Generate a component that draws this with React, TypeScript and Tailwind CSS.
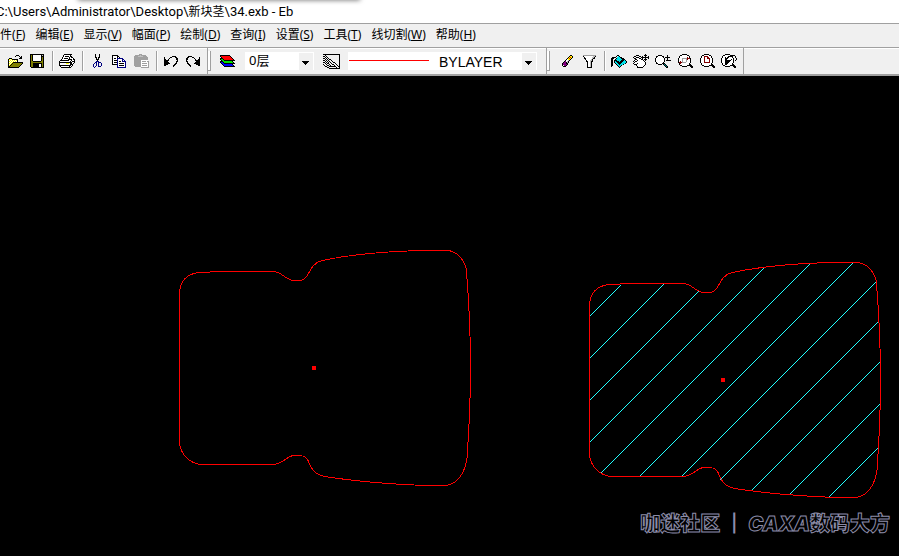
import React from "react";

const colours: Record<string, string> = {
  k: "#000000", w: "#ffffff", y: "#ffff00", o: "#808000", g: "#a0a0a0", n: "#000080",
  r: "#ff0000", e: "#00e000", b: "#0000ff", c: "#00e0e8", p: "#800080", m: "#800000",
  t: "#008080", s: "#c0c0c0",
};

function Pixels({ rows }: { rows: string[] }) {
  const w = Math.max(...rows.map((r) => r.length));
  return (
    <svg width={w} height={rows.length} shapeRendering="crispEdges" aria-hidden="true" className="shrink-0">
      {rows.flatMap((row, y) =>
        [...row].map((ch, x) =>
          ch === "." ? null : <rect key={`${x}-${y}`} x={x} y={y} width={1} height={1} fill={colours[ch]} />
        )
      )}
    </svg>
  );
}

const art: Record<string, string[]> = {
  open: [
    ".........kkk....", "........k...k.k.", ".............kk.", "..kkk.......kkk.", ".kywykkkkkk.....",
    ".kwywywywyk.....", ".kywywywywk.....", ".kwywykkkkkkkkkk", ".kywykoooooooook", ".kwykoooooooook.",
    ".kykoooooooook..", ".kkoooooooook...", ".kkkkkkkkkkk....",
  ],
  save: [
    "kkkkkkkkkkkkkk", "kokwwwwwwwwksk", "kokwwwwwwwwkkk", "kokwwwwwwwwkok", "kokwwwwwwwwkok",
    "kokwwwwwwwwkok", "kokwwwwwwwwkok", "kookkkkkkkkook", "kooooooooooook", "kookkkkkkkkkok",
    "kookkkkkkwwkok", "kookkkkkkwwkok", "kookkkkkkwwkok", ".kkkkkkkkkkkkk",
  ],
  print: [
    ".....kkkkkkkk...", "....kwwwwwwk....", "....kwkkkkwkk...", "...kwwwwwwkwkk..", "...kwkkkkwkwwwk.",
    "..kwwwwwwkkkkwkk", ".kkkkkkkkkwwkwwk", "kwwwwwwwwwwkwkkk", "kkkkkkkkkkkkkwwk", "kwwwwwwyyywkkwk.",
    "kwwwwwwwwwwkkk..", "kkkkkkkkkkkkwk..", ".kwwwwwwwwkwk...", "..kkkkkkkkkk....",
  ],
  cut: [
    "..k...k..", "..k...k..", "..k...k..", "..kk.kk..", "...k.k...", "...kkk...", "....k....",
    "...nnn...", "..nn.nnn.", ".n.n.n..n", "n..n.n..n", "n..n.n..n", "n.n..nnn.", ".n.......",
  ],
  copy: [
    "kkkkkk.........", "kwwwwkk........", "kwwwwkwk.......", "kwkkwnnnnnn....", "kwwwwnwwwwnn...",
    "kwkkknwwwwnwn..", "kwwwwnwkkwnnnn.", "kwkkknwwwwwwwn.", "kwwwwnwkkkkkwn.", "kkkkknwwwwwwwn.",
    ".....nwkkkkkwn.", ".....nwwwwwwwn.", ".....nnnnnnnnn.",
  ],
  paste: [
    ".....ggg.......", ".gggggsggggg...", "ggggsssssgggg..", "gggggggggggggg.", "gggggggggggggg.",
    "gggggggggggggg.", "gggggggwwwwwww.", "gggggggwggggwgg", "gggggggwwwwwwwg", "gggggggwgggggwg",
    "gggggggwwwwwwwg", "gggggggwgggggwg", ".ggggggwwwwwwwg", ".......gggggggg",
  ],
  undo: [
    "........kkkk..", "k.....kk...kk.", "k....k......kk", "kk..k.......kk", "kkkkk........k", "kkkk........kk",
    "kkkkk.......k.", "kkkkkk.....kk.", "kkkk......kk..", "kk.......kk...", ".........k....",
  ],
  redo: [
    "..kkkk........", ".kk...kk.....k", "kk......k....k", "kk.......k..kk", "k........kkkkk", "kk........kkkk",
    ".k.......kkkkk", ".kk.....kkkkkk", "..kk......kkkk", "...kk.......kk", "....k.........",
  ],
  layers: [
    "kkkkkkkkkk......", "krrrrrrrrrk.....", ".krrrrrrrrrk....", "kkkrrrrrrrrrk...", "keekrrrrrrrrrk..",
    ".keekkkkkkkkkkk.", "kkkeeeeeeeeek...", "kbbkeeeeeeeeek..", ".kbbkkkkkkkkkkk.", "..kbbbbbbbbbk...",
    "...kbbbbbbbbbk..", "....kkkkkkkkkkk.",
  ],
  style: [
    "kkkkkkkkkkkkkkkkk", "..k.............k", "kk.k............k", "..k.k...........k", "kk.k.k..........k",
    "..k.k.kk........k", "kk.k.k..k.......k", "..k.k.k..k......k", "kk.k.k.k..kk....k", "..k.kk..k...k...k",
    "k..k..k..kk..k..k", ".k..kk.k...k..k.k", "..kk..kkkkkkk..kk", "....kk.......k..k", "......kkkkkkkkkkk",
  ],
  eraser: [
    "........kk.", ".......kyyk", "......kyryk", ".....kyryk.", "....kwyyk..", "...kwwsk...", "..kpwsk....",
    ".kppksk....", "kpppkk.....", "kppppk.....", "kwppk......", ".kkk.......",
  ],
  filter: [
    "ggggggggggggg", "kwwwwwwwwwssk", ".kwwwwwwwssk.", ".kkwwwwwwskk.", "..kwwwwwsk...", "...kwwwssk...",
    "...kkwwskk...", "....kwwsk....", "....kwwsk....", "....kwwsk....", "....kwwsk....", "....kwwsk....", "....kkkkk....",
  ],
  fill: [
    "......kk........", ".....k.ck.......", ".kkkk.ccckk.....", "kkk..kcccckkk...", "kk..kcccccckkk..",
    "kk.kkkcccckkkck.", "kk.kckkkckkkccck", "kk.kcckkkkkcccck", "kk..kcckkkcccck.", "kk...kcckccck...",
    "kk....kccck.....", "k......kck......", "........k.......",
  ],
  pan: [
    "............k...", "...kkk.....kkk..", ".kk...kk.k..k..k", "k..kkk..kkkkkkkk", ".kkwwwkk.k..k..k", "..kkwwwwkk.kkk..",
    ".kwwkwwwwwk.k...", "k.kkwwwwwwwk....", ".kwwwwwwwwwwk...", "kwwwkwwwwwwwk...", ".kkkwwwwwwwwk...", "...kwwwwwwwk....",
    "....kwwwwwk.....", "....kkkkkk......",
  ],
  zoom: [
    "...kkkk.....k...", ".kkwwwwkk...k...", ".kwwwwwwk.kkkkk.", "kwwwwwwwwk..k...", "kwwwwwwwwk..k...", "kwwwwwwwwk.kkkkk",
    "kwwwwwwwwk......", ".kwwwwwwk.......", ".kkwwwwkkk......", "...kkkk.ktk.....", ".........ktk....", "..........ktk...", "...........kk...",
  ],
  zoomBox: [
    "....kkkkk......", "..kkwwwwwkk....", ".kwwwwwwwwwk...", ".kwwwwwwwmwk...", "kwwwgggggmmmk..", "kwwwgwwwgmwwk..", "kwwwgwwwgwwwk..",
    "kwmwgwwwgwwwk..", "kmmmggggwwwwk..", ".kmwwwwwwwwk...", ".kwwwwwwwwwkk..", "..kkwwwwwkkkkk.", "....kkkkk...kkk", ".............kk",
  ],
  zoomPage: [
    "....kkkkk......", "..kkwwwwwkk....", ".kwwmmmmwwwk...", ".kwwmwwmmwwk...", "kwwwmwwmmmwwk..", "kwwwmwwwwmwwk..", "kwwwmwwwwmwwk..",
    "kwwwmwwwwmwwk..", "kwwwmmmmmmwwk..", ".kwwwwwwwwwk...", ".kwwwwwwwwwkk..", "..kkwwwwwkkkkk.", "....kkkkk...kkk", ".............kk",
  ],
  zoomBack: [
    "....kkkkk.......", "..kkwwwwwkkkkk..", ".kwwwwwkkkkk..k.", ".kwwkwkkwwwk..k.", "kwwwkkkwwwwwk..k", "kwwwkkwwwwkwk..k", "kwwwkkkkkkwwk.k.",
    "kwwwkkkkkwwwk...", "kwwwkkkkwwwwk...", ".kwwkkkwwwwk....", ".kwwkkwwwwwkk...", "..kkwwwwwkkkkk..", "....kkkkk...kkk.", ".............kk.",
  ],
};

function Tool({ icon, label }: { icon: string; label: string }) {
  return (
    <button type="button" aria-label={label} className="flex h-6 w-[22px] shrink-0 items-center justify-center">
      <Pixels rows={art[icon]} />
    </button>
  );
}

const Sep = () => <span className="mr-[3px] ml-1 h-5 w-px shrink-0 bg-[#a0a0a0] shadow-[1px_0_0_#ffffff]" />;
const Grip = () => (
  <span className="ml-[3px] flex h-full shrink-0 items-center gap-1 border-l border-[#a0a0a0] pr-1.5">
    <span className="h-5 w-[3px] border-r border-b border-[#a0a0a0] bg-white" />
  </span>
);
const Arrow = () => (
  <svg width="7" height="4" shapeRendering="crispEdges" className="pointer-events-none absolute top-2 right-1">
    <path d="M0 0h7v1h-1v1h-1v1h-1v1h-1v-1h-1v-1h-1v-1h-1z" />
  </svg>
);
const ArrowBox = () => (
  <span className="pointer-events-none absolute top-px right-px h-[18px] w-3.5 bg-[#f0f0f0]">
    <Arrow />
  </span>
);

const menus = [
  ["文件", "F"], ["编辑", "E"], ["显示", "V"], ["幅面", "P"], ["绘制", "D"],
  ["查询", "I"], ["设置", "S"], ["工具", "T"], ["线切割", "W"], ["帮助", "H"],
];

const outline =
  "M179.5 294C179.5 282 186 273 201 272.5L219 271.5H274C282 272 286 280.5 294 280.5H300C310 280 308 264 322 260.5Q365 251.5 425 250.5H447C458 251 466 262 466.5 272Q470.5 320 470.5 368Q470.5 410 467 458C465 473 457 485 445 485.5H425Q365 483 325 476.5C304 472 314 455.5 299 455.5H294C285 456 285 464 272 464.5H203C190 464.5 179.5 454 179.5 441Z";

const hatches = [
  [589, 316, 620, 285], [589, 358, 663, 284], [589, 400, 698, 291], [589, 442, 763, 268],
  [601, 472, 809, 264], [639, 476, 852, 263], [682, 475, 875, 282], [720, 479, 877, 322],
  [751, 490, 879, 362], [789, 494, 879, 404], [829, 496, 877, 448],
];

function Drawing() {
  return (
    <svg viewBox="0 76 899 480" shapeRendering="crispEdges" fill="none" className="block w-full" role="img" aria-label="CAD">
      {hatches.map(([x1, y1, x2, y2], i) => (
        <line key={i} x1={x1} y1={y1 + 1} x2={x2 + 1} y2={y2} stroke="#20ffff" />
      ))}
      <path d={outline} stroke="#ff0000" />
      <path d={outline} stroke="#ff0000" transform="translate(410 12)" />
      <path d="M312 366h4v4h-4zM721 378h4v4h-4z" fill="#ff0000" />
    </svg>
  );
}

export default function App() {
  return (
    <div className="flex min-h-screen flex-col overflow-hidden bg-black font-['Noto_Sans','Noto_Sans_CJK_SC',sans-serif] text-xs text-black">
      <header className="relative h-[23px] bg-white">
        <div className="absolute -top-1 left-[78px] h-1 w-[282px] shadow-[0_0_5px_#000000a0]" />
        <h1 className="-ml-1 font-['Roboto','Noto_Sans_CJK_SC',sans-serif] text-[13px] leading-6 whitespace-nowrap">
          C:\Users\Administrator\Desktop\<span className="text-xs">新块茎</span>\34.exb - Eb
        </h1>
      </header>
      <nav className="flex h-6 items-center gap-[10px] border-t border-[#a0a0a0] bg-[#f0f0f0] pb-0.5">
        {menus.map(([name, key], i) => (
          <button key={key} type="button" className={`shrink-0 whitespace-nowrap ${i === 0 ? "-ml-3" : ""}`}>
            {name}(<u>{key}</u>)
          </button>
        ))}
      </nav>
      <div className="flex h-[29px] items-center border-t border-b-2 border-[#a0a0a0] bg-[#f0f0f0] pl-1 shadow-[inset_0_1px_0_#ffffff]">
        <Tool icon="open" label="打开" />
        <Tool icon="save" label="保存" />
        <Sep />
        <Tool icon="print" label="打印" />
        <Sep />
        <Tool icon="cut" label="剪切" />
        <Tool icon="copy" label="复制" />
        <Tool icon="paste" label="粘贴" />
        <Sep />
        <Tool icon="undo" label="撤销" />
        <Tool icon="redo" label="重做" />
        <Grip />
        <Tool icon="layers" label="图层" />
        <div className="relative mx-1.5 h-4.5 w-[69px] bg-white">
          <select aria-label="图层" className="h-4.5 w-full appearance-none pl-1 text-[13px]"><option>0层</option></select>
          <ArrowBox />
        </div>
        <Tool icon="style" label="线型" />
        <div className="relative mx-1.5 h-4.5 w-[189px] bg-white">
          <span className="absolute top-2 left-px h-px w-20 bg-[#ff0000]" />
          <select aria-label="线型" className="h-4.5 w-full appearance-none pl-[91px] font-['Liberation_Sans',sans-serif] text-sm"><option>BYLAYER</option></select>
          <ArrowBox />
        </div>
        <Grip />
        <Tool icon="eraser" label="删除" />
        <Tool icon="filter" label="过滤" />
        <Sep />
        <Tool icon="fill" label="重画" />
        <Tool icon="pan" label="平移" />
        <Tool icon="zoom" label="缩放" />
        <Tool icon="zoomBox" label="窗口" />
        <Tool icon="zoomPage" label="全部" />
        <Tool icon="zoomBack" label="回溯" />
        <span className="ml-[3px] h-full w-px bg-[#a0a0a0]" />
      </div>
      <main className="relative">
        <Drawing />
        <p className="absolute right-[9px] bottom-[18px] font-['Inter','Noto_Sans_CJK_SC',sans-serif] text-xl leading-7 font-black whitespace-nowrap text-black [-webkit-text-stroke:1px_#8c8ca8]">
          咖迷社区<span className="px-1">｜</span><i>CAXA</i>数码大方
        </p>
      </main>
    </div>
  );
}
